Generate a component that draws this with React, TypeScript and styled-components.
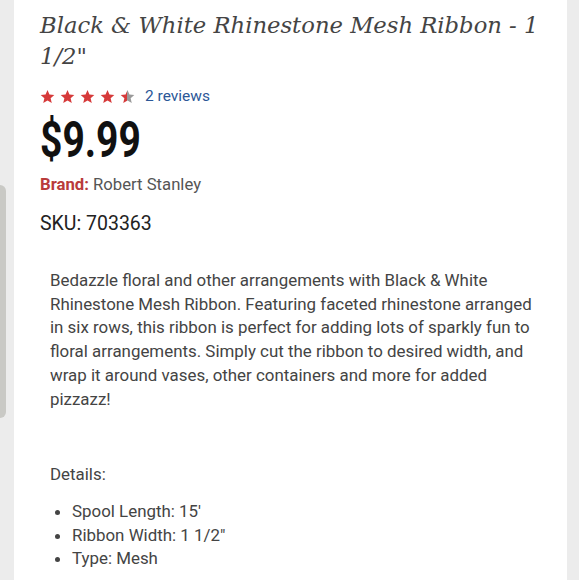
import React from "react";
import styled, { createGlobalStyle } from "styled-components";

const Global = createGlobalStyle`
  html, body { margin: 0; padding: 0; background: #ececec; }
  body { font-family: Roboto, "Noto Sans", sans-serif; overflow: hidden; }
`;

const Page = styled.div`
  position: relative;
  height: 580px;
  display: flex;
  padding-left: 14px;
`;

const Handle = styled.div`
  position: absolute;
  left: 0;
  top: 185px;
  width: 6px;
  height: 233px;
  background: #c9c9c5;
  border-radius: 0 6px 6px 0;
`;

const Panel = styled.main`
  width: 553px;
  background: #ffffff;
  padding: 10px 20px 0 26px;
  box-sizing: border-box;
`;

const Title = styled.h1`
  margin: 0;
  font-family: "DejaVu Serif", serif;
  font-style: italic;
  font-weight: normal;
  font-size: 22.7px;
  line-height: 31px;
  color: #444;
`;

const RatingRow = styled.div`
  display: flex;
  align-items: center;
  gap: 10px;
  margin-top: 13px;
  height: 22px;
`;

const Stars = styled.div`
  display: flex;
  gap: 5px;
`;

const Reviews = styled.a`
  font-size: 15.5px;
  color: #2b5797;
  text-decoration: none;
`;

const Price = styled.div`
  margin-top: 8px;
  height: 50px;
  font-family: Roboto, sans-serif;
  font-weight: 700;
  font-size: 50px;
  line-height: 50px;
  color: #111;
  transform: scaleX(0.78);
  transform-origin: left center;
`;

const Brand = styled.div`
  margin-top: 9px;
  font-size: 16.7px;
  line-height: 22px;
  color: #555;
`;

const BrandLabel = styled.span`
  font-weight: 700;
  color: #b93b3b;
`;

const Sku = styled.div`
  margin-top: 16px;
  font-size: 19.5px;
  line-height: 24px;
  color: #222;
`;

const Description = styled.p`
  margin: 33px 0 0 10px;
  font-size: 16.9px;
  line-height: 23.7px;
  color: #444;
`;

const DetailsLabel = styled.p`
  margin: 51px 0 0 10px;
  font-size: 16.9px;
  line-height: 24px;
  color: #444;
`;

const List = styled.ul`
  margin: 14px 0 0 10px;
  padding-left: 22px;
  font-size: 16.9px;
  line-height: 23.5px;
  color: #444;
`;

const Star: React.FC<{ half?: boolean; id: string }> = ({ half, id }) => (
  <svg width="15" height="15" viewBox="0 0 24 24">
    <defs>
      <linearGradient id={id}>
        <stop offset="50%" stopColor="#d63a3a" />
        <stop offset="50%" stopColor="#9a9a9a" />
      </linearGradient>
    </defs>
    <path
      d="M12 1.5l3.1 7.2 7.8.7-5.9 5.2 1.8 7.7L12 18.2 5.2 22.3 7 14.6 1.1 9.4l7.8-.7z"
      fill={half ? `url(#${id})` : "#d63a3a"}
    />
  </svg>
);

export default function App() {
  return (
    <>
      <Global />
      <Page>
        <Handle />
        <Panel>
          <Title>Black &amp; White Rhinestone Mesh Ribbon - 1 1/2"</Title>
          <RatingRow>
            <Stars>
              <Star id="s1" />
              <Star id="s2" />
              <Star id="s3" />
              <Star id="s4" />
              <Star id="s5" half />
            </Stars>
            <Reviews href="#">2 reviews</Reviews>
          </RatingRow>
          <Price>$9.99</Price>
          <Brand>
            <BrandLabel>Brand:</BrandLabel> Robert Stanley
          </Brand>
          <Sku>SKU: 703363</Sku>
          <Description>
            Bedazzle floral and other arrangements with Black &amp; White
            Rhinestone Mesh Ribbon. Featuring faceted rhinestone arranged in
            six rows, this ribbon is perfect for adding lots of sparkly fun to
            floral arrangements. Simply cut the ribbon to desired width, and
            wrap it around vases, other containers and more for added pizzazz!
          </Description>
          <DetailsLabel>Details:</DetailsLabel>
          <List>
            <li>Spool Length: 15'</li>
            <li>Ribbon Width: 1 1/2"</li>
            <li>Type: Mesh</li>
          </List>
        </Panel>
      </Page>
    </>
  );
}
